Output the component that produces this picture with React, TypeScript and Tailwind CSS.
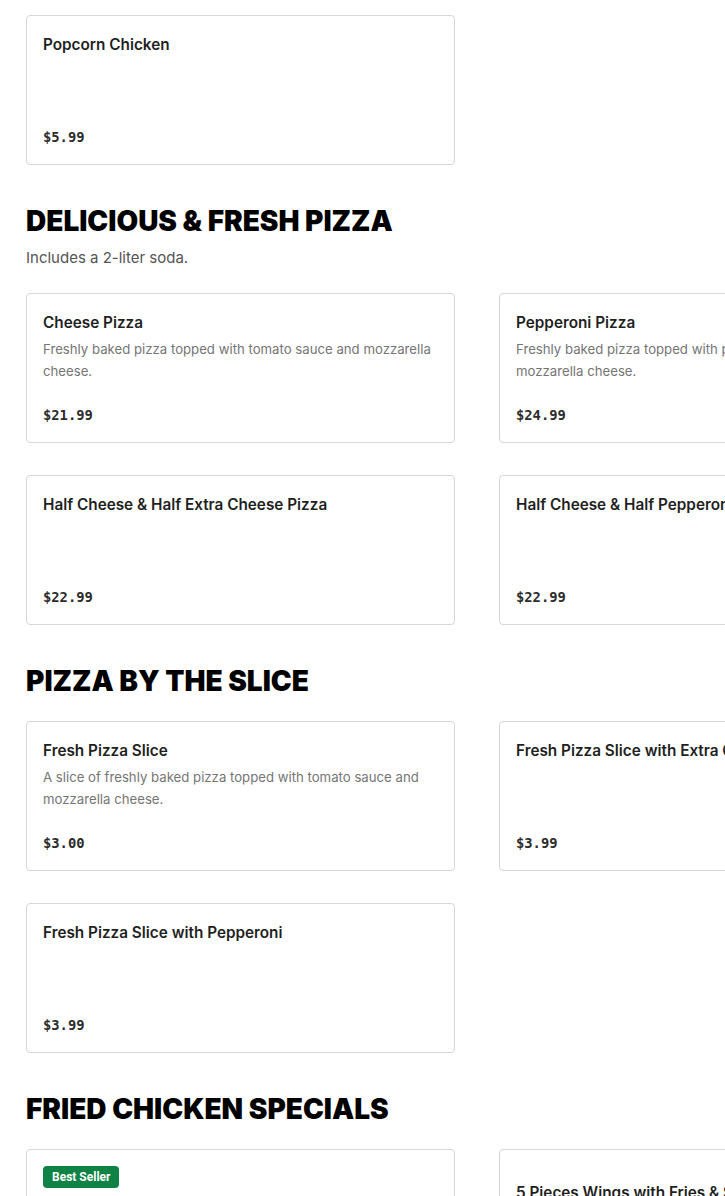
import React from "react";

type Item = { name: string; desc?: string; price: string; badge?: string; spacer?: boolean };

const sans = "font-['Inter','Noto_Sans',sans-serif]";

function Card({ item }: { item: Item }) {
  return (
    <div className="flex h-[150px] w-[429px] flex-col justify-between rounded-[4px] border border-[#d6d6d6] bg-white p-4">
      <div>
        {item.badge && (
          <div className="mb-2 flex h-[22px] w-fit items-center rounded-[4px] bg-[#0e8345] px-[9px] font-['Roboto',sans-serif] text-[12px] font-bold leading-none text-white">
            {item.badge}
          </div>
        )}
        {item.spacer && <div className="h-[14px]" />}
        <div className={`${sans} pt-px text-[15.3px] font-semibold leading-6 text-[#1f1f1f]`}>{item.name}</div>
        {item.desc && (
          <div className={`${sans} mt-[3px] text-[13.2px] leading-[22px] text-[#757575]`}>{item.desc}</div>
        )}
      </div>
      <div className="pb-px font-['DejaVu_Sans_Mono',monospace] text-[13.8px] font-bold leading-5 text-[#2b2b2b]">
        {item.price}
      </div>
    </div>
  );
}

function Grid({ items }: { items: Item[] }) {
  return (
    <div className="grid grid-cols-[429px_429px] gap-x-[44px] gap-y-8">
      {items.map((it, i) => (
        <Card key={i} item={it} />
      ))}
    </div>
  );
}

function Section({ title, subtitle, items }: { title: string; subtitle?: string; items: Item[] }) {
  return (
    <section className="mt-10">
      <h2 className="font-['Inter',sans-serif] text-[28px] font-black uppercase leading-8 tracking-normal text-black">
        {title}
      </h2>
      {subtitle && <p className={`${sans} mt-2 pt-px text-[15px] leading-6 text-[#545454]`}>{subtitle}</p>}
      <div className={subtitle ? "mt-[23px]" : "mt-6"}>
        <Grid items={items} />
      </div>
    </section>
  );
}

export default function App() {
  return (
    <div className="w-full overflow-hidden bg-white">
      <div className="w-[960px] pl-[26px] pt-[15px]">
        <Grid items={[{ name: "Popcorn Chicken", price: "$5.99" }]} />
        <Section
          title="Delicious & Fresh Pizza"
          subtitle="Includes a 2-liter soda."
          items={[
            {
              name: "Cheese Pizza",
              desc: "Freshly baked pizza topped with tomato sauce and mozzarella cheese.",
              price: "$21.99",
            },
            {
              name: "Pepperoni Pizza",
              desc: "Freshly baked pizza topped with pepperoni, tomato sauce and mozzarella cheese.",
              price: "$24.99",
            },
            { name: "Half Cheese & Half Extra Cheese Pizza", price: "$22.99" },
            { name: "Half Cheese & Half Pepperoni Pizza", price: "$22.99" },
          ]}
        />
        <Section
          title="Pizza by the Slice"
          items={[
            {
              name: "Fresh Pizza Slice",
              desc: "A slice of freshly baked pizza topped with tomato sauce and mozzarella cheese.",
              price: "$3.00",
            },
            { name: "Fresh Pizza Slice with Extra Cheese", price: "$3.99" },
            { name: "Fresh Pizza Slice with Pepperoni", price: "$3.99" },
          ]}
        />
        <Section
          title="Fried Chicken Specials"
          items={[
            { name: "3 Pieces Chicken with Fries & Soda", price: "$12.99", badge: "Best Seller" },
            { name: "5 Pieces Wings with Fries & Soda", price: "$11.99", spacer: true },
          ]}
        />
      </div>
    </div>
  );
}
